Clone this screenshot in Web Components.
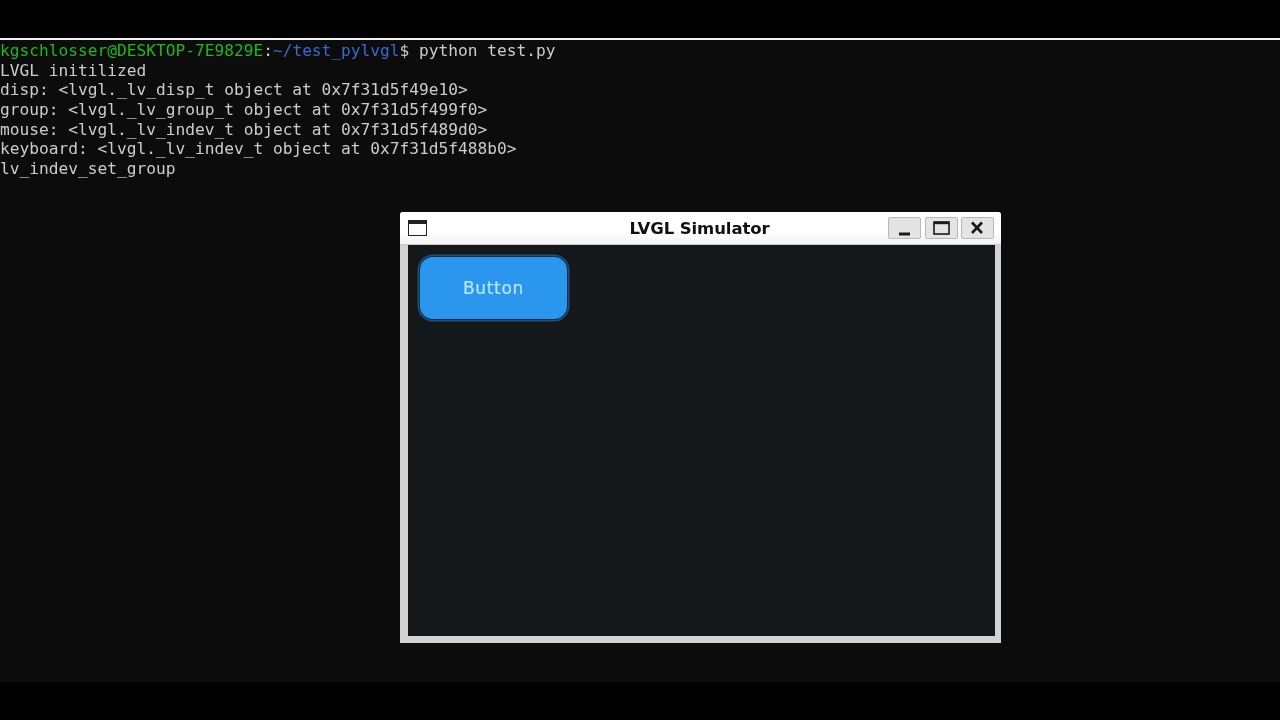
<!DOCTYPE html>
<html>
<head>
<meta charset="utf-8">
<title>LVGL Simulator</title>
<style>
  html, body { margin: 0; height: 100%; background: #000; overflow: hidden; }
</style>
</head>
<body>
<video-frame>
  <term-pane>
    <div><span style="color:#1eb81e">kgschlosser@DESKTOP-7E9829E</span><span style="color:#ccc">:</span><span style="color:#366ad0">~/test_pylvgl</span><span style="color:#ccc">$ python test.py</span></div>
    <div>LVGL initilized</div>
    <div>disp: &lt;lvgl._lv_disp_t object at 0x7f31d5f49e10&gt;</div>
    <div>group: &lt;lvgl._lv_group_t object at 0x7f31d5f499f0&gt;</div>
    <div>mouse: &lt;lvgl._lv_indev_t object at 0x7f31d5f489d0&gt;</div>
    <div>keyboard: &lt;lvgl._lv_indev_t object at 0x7f31d5f488b0&gt;</div>
    <div>lv_indev_set_group</div>
  </term-pane>
  <sim-window title="LVGL Simulator">
    <lv-button>Button</lv-button>
  </sim-window>
</video-frame>

<script>
class VideoFrame extends HTMLElement {
  constructor() {
    super();
    this.shadow = this.attachShadow({ mode: 'open' });
  }
  connectedCallback() {
    this.shadow.innerHTML = `
      <style>
        :host { display: flex; flex-direction: column; height: 720px; background: #000; }
        .rule { height: 2px; margin-top: 38px; background: #f2f2f2; }
        .screen { position: relative; height: 642px; background: #0c0c0c; }
      </style>
      <div class="rule"></div>
      <div class="screen"><slot></slot></div>
    `;
  }
}

class TermPane extends HTMLElement {
  constructor() {
    super();
    this.shadow = this.attachShadow({ mode: 'open' });
  }
  connectedCallback() {
    this.shadow.innerHTML = `
      <style>
        :host {
          display: block;
          padding-top: 1px;
          font: 16.2px/19.67px "DejaVu Sans Mono", monospace;
          color: #ccc;
          white-space: nowrap;
          filter: blur(.35px);
        }
      </style>
      <slot></slot>
    `;
  }
}

class WinControl extends HTMLElement {
  constructor() {
    super();
    this.shadow = this.attachShadow({ mode: 'open' });
  }
  connectedCallback() {
    const icons = {
      min: '<path d="M3 14h11" stroke-width="3"/>',
      max: '<rect x="1" y="2" width="15" height="12" stroke-width="1.6"/><path d="M1 3h15" stroke-width="2.4"/>',
      close: '<path d="M3 2.500l10 10.500M13 2.500L3 13" stroke-width="2.600"/>'
    };
    this.shadow.innerHTML = `
      <style>
        :host {
          display: flex; align-items: center; justify-content: center;
          width: 31px; height: 20px;
          background: #e4e4e4;
          border: 1px solid #b8b8b8;
          border-radius: 2px;
        }
        svg { width: 17px; height: 16px; fill: none; stroke: #1a1a1a; }
      </style>
      <svg viewBox="0 0 17 16">${icons[this.getAttribute('kind')]}</svg>
    `;
  }
}

class SimWindow extends HTMLElement {
  constructor() {
    super();
    this.shadow = this.attachShadow({ mode: 'open' });
  }
  connectedCallback() {
    this.shadow.innerHTML = `
      <style>
        :host {
          position: absolute; left: 400px; top: 172px;
          display: flex; flex-direction: column;
          box-sizing: border-box;
          width: 601px; height: 431px;
          background: #d2d2d2;
          border-radius: 3px 3px 0 0;
          filter: blur(.4px);
        }
        .bar {
          display: grid; grid-template-columns: 1fr auto 1fr; align-items: center;
          height: 33px; padding: 0 7px 0 8px; box-sizing: border-box;
          background: linear-gradient(#fff 60%, #f3f3f3);
          border-radius: 3px 3px 0 0;
          border-bottom: 1px solid #c8c8c8;
        }
        .sys {
          width: 17px; height: 11px;
          border: 1.500px solid #222; border-top-width: 4px; background: #fff;
        }
        .title {
          font: 700 16.500px "DejaVu Sans", sans-serif;
          color: #111;
          letter-spacing: -.1px;
          padding-right: 3px;
        }
        .ctl { display: flex; gap: 3.500px; justify-content: flex-end; }
        .client {
          flex: 1; margin: 0 6px 7px 8px; padding: 10px;
          background: #15181b;
          display: flex; align-items: flex-start;
        }
      </style>
      <div class="bar">
        <div class="sys"></div>
        <div class="title">${this.getAttribute('title')}</div>
        <div class="ctl">
          <win-control kind="min"></win-control>
          <win-control kind="max"></win-control>
          <win-control kind="close"></win-control>
        </div>
      </div>
      <div class="client"><slot></slot></div>
    `;
  }
}

class LvButton extends HTMLElement {
  constructor() {
    super();
    this.shadow = this.attachShadow({ mode: 'open' });
  }
  connectedCallback() {
    this.shadow.innerHTML = `
      <style>
        :host {
          display: flex; align-items: center; justify-content: center;
          box-sizing: border-box;
          width: 147px; height: 62px; margin: 2px;
          background: #2a96ee;
          border-radius: 13px;
          box-shadow: 0 0 0 1px #0f2f4d, 0 0 0 2.500px #1d4f78;
          font: 400 17px "DejaVu Sans", sans-serif;
          letter-spacing: .7px;
          color: #b4e6fc;
          -webkit-text-stroke: .2px #b4e6fc;
          filter: blur(.2px);
        }
      </style>
      <slot></slot>
    `;
  }
}

customElements.define('video-frame', VideoFrame);
customElements.define('term-pane', TermPane);
customElements.define('win-control', WinControl);
customElements.define('sim-window', SimWindow);
customElements.define('lv-button', LvButton);
</script>
</body>
</html>
